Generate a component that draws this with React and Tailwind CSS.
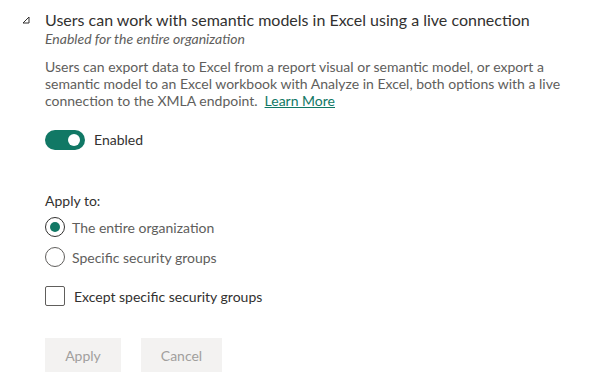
import React from 'react';

function Caret() {
  return (
    <svg width="8" height="8" viewBox="0 0 8 8" className="shrink-0">
      <path d="M1 7 L7 1 L7 7 Z" fill="none" stroke="#323130" strokeWidth="1" strokeLinejoin="miter" />
    </svg>
  );
}

export default function App() {
  return (
    <div className="w-[599px] h-[383px] bg-white pl-[45px] pt-[9px] font-['Lato',sans-serif]">
      <div className="flex items-center -ml-[23px] gap-[15px]">
        <Caret />
        <h2 className="text-[16px] leading-[21px] text-[#323130] whitespace-nowrap">
          Users can work with semantic models in Excel using a live connection
        </h2>
      </div>
      <p className="text-[14px] leading-[18px] italic text-[#605e5c]">Enabled for the entire organization</p>
      <div className="mt-[10px] text-[14px] leading-[17px] text-[#605e5c]">
        <div>Users can export data to Excel from a report visual or semantic model, or export a</div>
        <div>semantic model to an Excel workbook with Analyze in Excel, both options with a live</div>
        <div className="flex gap-[7px]">
          <span>connection to the XMLA endpoint.</span>
          <a href="#" className="text-[#117865] underline underline-offset-1">Learn More</a>
        </div>
      </div>

      <div className="mt-[20px] flex items-center gap-[9px]">
        <button className="w-10 h-5 rounded-full bg-[#117865] flex items-center justify-end pr-[5px]">
          <span className="w-3 h-3 rounded-full bg-white" />
        </button>
        <span className="text-[14px] text-[#323130]">Enabled</span>
      </div>

      <div className="mt-[41px] text-[14px] leading-[20px] text-[#323130]">Apply to:</div>

      <div className="mt-[6px] flex items-center gap-[7px] h-5">
        <span className="w-5 h-5 rounded-full border border-[#323130] flex items-center justify-center">
          <span className="w-[10px] h-[10px] rounded-full bg-[#117865]" />
        </span>
        <span className="text-[14px] text-[#605e5c]">The entire organization</span>
      </div>
      <div className="mt-[10px] flex items-center gap-[7px] h-5">
        <span className="w-5 h-5 rounded-full border border-[#605e5c]" />
        <span className="text-[14px] text-[#605e5c]">Specific security groups</span>
      </div>

      <div className="mt-[19px] flex items-center gap-[9px] h-5">
        <span className="w-5 h-5 rounded-[2px] border border-[#605e5c]" />
        <span className="text-[14px] text-[#323130]">Except specific security groups</span>
      </div>

      <div className="mt-[32px] flex gap-[20px]">
        <button disabled className="w-[76px] h-[34px] bg-[#f3f2f1] text-[14px] text-[#a19f9d]">Apply</button>
        <button disabled className="w-[81px] h-[34px] bg-[#f3f2f1] text-[14px] text-[#a19f9d]">Cancel</button>
      </div>
    </div>
  );
}
